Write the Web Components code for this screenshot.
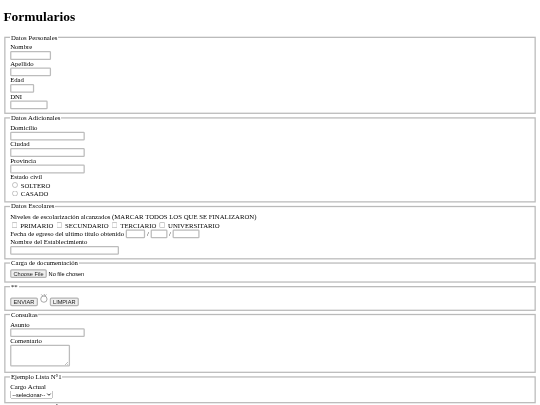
<!DOCTYPE html>
<html lang="es"><head><meta charset="utf-8"><title>Formularios</title>
<style>
html,body{margin:0;padding:0;background:#fff;height:405px;overflow:hidden}
body{font-family:"Liberation Serif",serif;font-size:16px;color:#000}
</style></head><body>
<form-page>
  <form-set legend="Datos Personales">
    <form-field label="Nombre" w="97"></form-field>
    <form-field label="Apellido" w="97"></form-field>
    <form-field label="Edad" w="57"></form-field>
    <form-field label="DNI" w="89" number></form-field>
  </form-set>
  <form-set legend="Datos Adicionales">
    <form-field label="Domicilio" w="177"></form-field>
    <form-field label="Ciudad" w="177"></form-field>
    <form-field label="Provincia" w="177"></form-field>
    <form-field label="Estado civil"></form-field>
    <form-choice type="radio" label="SOLTERO" block></form-choice>
    <form-choice type="radio" label="CASADO" block></form-choice>
  </form-set>
  <form-set legend="Datos Escolares">
    <form-text>Niveles de escolarización alcanzados (MARCAR TODOS LOS QUE SE FINALIZARON)</form-text>
    <form-choice type="checkbox" label="PRIMARIO"></form-choice>
    <form-choice type="checkbox" label="SECUNDARIO"></form-choice>
    <form-choice type="checkbox" label="TERCIARIO"></form-choice>
    <form-choice type="checkbox" label="UNIVERSITARIO"></form-choice>
    <form-date label="Fecha de egreso del ultimo titulo obtenido"></form-date>
    <form-field label="Nombre del Establecimiento" w="258"></form-field>
  </form-set>
  <form-set legend="Carga de documentación">
    <form-file></form-file>
  </form-set>
  <form-set legend="**">
    <form-actions></form-actions>
  </form-set>
  <form-set legend="Consultas">
    <form-field label="Asunto" w="177"></form-field>
    <form-field label="Comentario" w="142" h="52" area></form-field>
  </form-set>
  <form-set legend="Ejemplo Lista N°1">
    <form-select label="Cargo Actual"></form-select>
  </form-set>
  <form-set legend="Ejemplo Lista N°2"></form-set>
</form-page>
<script>
const CTL='input[type=text],input[type=number],textarea{border:3px solid #bcbcbc;border-radius:3px;padding:0;box-sizing:border-box;background:#fff;outline:0;height:21px}';
const BTN='button{font:13.33px "Liberation Sans",sans-serif;background:#efefef;border:3px solid #b4b4b4;border-radius:4px;color:#222;padding:1px 5px;height:21px;margin:0}';
function def(name,render){
  customElements.define(name,class extends HTMLElement{
    constructor(){super();this.attachShadow({mode:'open'});}
    connectedCallback(){this.shadowRoot.innerHTML=render(this);}
  });
}
def('form-page',()=>`<style>:host{display:block;width:540px;height:405px;overflow:hidden}
.w{width:1280px;box-sizing:border-box;padding:0 8px;transform:scale(.421875);transform-origin:0 0;filter:blur(.7px)}
h1{font:bold 32px "Liberation Serif",serif;margin:0;padding:21.44px 0;}</style>
<div class="w"><h1>Formularios</h1><slot></slot></div>`);
def('form-set',el=>`<style>:host{display:block}legend{white-space:nowrap}fieldset{border:3px solid #bababa;padding:.35em 11px 8px}</style><fieldset><legend>${el.getAttribute('legend')}</legend><slot></slot></fieldset>`);
def('form-field',el=>{
  const w=el.getAttribute('w'),h=el.getAttribute('h');
  const ctl=!w?'':el.hasAttribute('area')?`<br><textarea style="width:${w}px;height:${h}px"></textarea>`
    :`<br><input type="${el.hasAttribute('number')?'number':'text'}" style="width:${w}px">`;
  return `<style>:host{display:block}${CTL}</style><label>${el.getAttribute('label')}</label>${ctl}`;
});
def('form-choice',el=>`<style>:host{display:${el.hasAttribute('block')?'block':'inline'}}</style><label><input type="${el.getAttribute('type')}"> ${el.getAttribute('label')}</label>`);
def('form-text',()=>`<style>:host{display:block;margin-bottom:2px}</style><slot></slot>`);
def('form-date',el=>`<style>:host{display:block}${CTL}</style><label>${el.getAttribute('label')}</label> <input type="text" style="width:46px"> / <input type="text" style="width:40px"> / <input type="text" style="width:64px">`);
def('form-file',()=>`<style>:host{display:block;font:13.33px "Liberation Sans",sans-serif}${BTN}button{margin-right:4px}</style><button type="button">Choose File</button><span>No file chosen</span>`);
def('form-actions',()=>`<style>:host{display:block}${BTN}svg{width:20px;height:27px}</style><button type="button">ENVIAR</button> <svg viewBox="0 0 20 27" fill="none" stroke="#a0a0a0" stroke-width="2.2"><circle cx="10" cy="15" r="7.5"/><path d="M4 4l4 4M16 4l-4 4M11 3v4"/></svg> <button type="button">LIMPIAR</button>`);
def('form-select',el=>`<style>:host{display:block}</style><label>${el.getAttribute('label')}</label><br><select><option>--selecionar--</option></select>`);
</script>
</body></html>
